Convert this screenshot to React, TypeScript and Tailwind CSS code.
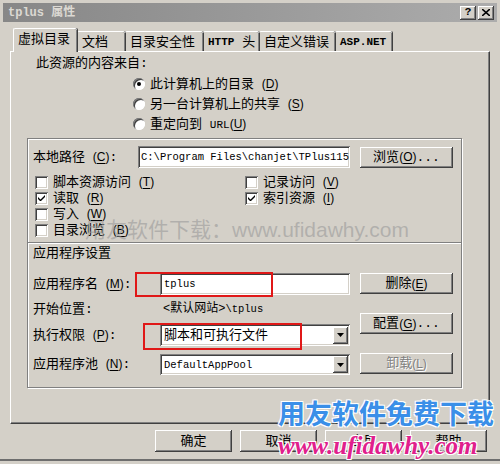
import React from 'react';

// Classic 3D bevels
const raised =
  'bg-[#d4d0c8] shadow-[inset_-1px_-1px_#404040,inset_1px_1px_#ffffff,inset_-2px_-2px_#808080,inset_2px_2px_#d4d0c8]';
const sunken =
  'bg-white shadow-[inset_1px_1px_#808080,inset_-1px_-1px_#ffffff,inset_2px_2px_#404040,inset_-2px_-2px_#d4d0c8]';

const Key = ({ k }: { k: string }) => (
  <span className="text-[12px] font-['Liberation_Sans',sans-serif]">
    (<span className="underline underline-offset-2">{k}</span>)
  </span>
);

const Radio = ({ checked, children }: { checked?: boolean; children: React.ReactNode }) => (
  <div className="h-[20px] flex items-center">
    <div className="w-[12px] h-[12px] rounded-full bg-white shadow-[inset_1px_1px_#808080,inset_-1px_-1px_#ffffff,inset_2px_2px_#404040] flex items-center justify-center">
      {checked && <div className="w-[4px] h-[4px] rounded-full bg-black" />}
    </div>
    <span className="ml-[5px] whitespace-nowrap">{children}</span>
  </div>
);

const Check = ({ checked, children }: { checked?: boolean; children: React.ReactNode }) => (
  <div className="h-[16px] flex items-center">
    <div className={`w-[13px] h-[13px] flex items-center justify-center ${sunken}`}>
      {checked && (
        <svg width="7" height="7" viewBox="0 0 7 7">
          <path d="M0 2 L0 4 L2 6 L3 6 L7 2 L7 0 L2.5 4.5 Z" fill="#000" />
        </svg>
      )}
    </div>
    <span className="ml-[5px] whitespace-nowrap">{children}</span>
  </div>
);

const Button = ({
  children,
  className = '',
  disabled,
}: {
  children: React.ReactNode;
  className?: string;
  disabled?: boolean;
}) => (
  <div
    className={`flex items-center justify-center whitespace-nowrap ${raised} ${
      disabled ? 'text-[#808080] [text-shadow:1px_1px_#ffffff]' : 'text-black'
    } ${className}`}
  >
    {children}
  </div>
);

const Select = ({ value }: { value: React.ReactNode }) => (
  <div className={`w-[190px] h-full flex items-center ${sunken} pl-[4px] pr-[2px]`}>
    <span className="flex-1">{value}</span>
    <div className={`w-[15px] h-[17px] flex items-center justify-center ${raised}`}>
      <svg width="7" height="4" viewBox="0 0 7 4">
        <path d="M0 0 H7 L3.5 4 Z" fill="#000" />
      </svg>
    </div>
  </div>
);

const tabs = [
  { label: '文档', w: 'w-[48px]' },
  { label: '目录安全性', w: 'w-[78px]' },
  { label: 'HTTP 头', w: 'w-[56px]' },
  { label: '自定义错误', w: 'w-[76px]' },
  { label: 'ASP.NET', w: 'w-[57px]' },
];

export default function App() {
  return (
    <div className="w-[500px] h-[464px] bg-[#d4d0c8] relative overflow-hidden pt-[3px] text-[13px] text-black font-['Liberation_Mono','Noto_Sans_CJK_SC',monospace] leading-none">
      {/* Title bar */}
      <div className="mx-[3px] h-[19px] flex items-center bg-gradient-to-r from-[#878787] to-[#acacac] pl-[5px] pr-[3px]">
        <span className="font-bold text-[12px] text-[#dcd9d3]">tplus 属性</span>
        <div className="ml-auto flex gap-[2px]">
          <div className={`w-[16px] h-[14px] flex items-center justify-center font-bold text-[11px] ${raised}`}>?</div>
          <div className={`w-[16px] h-[14px] flex items-center justify-center ${raised}`}>
            <svg width="8" height="7" viewBox="0 0 8 7">
              <path d="M0 0 L8 7 M8 0 L0 7" stroke="#000" strokeWidth="1.6" />
            </svg>
          </div>
        </div>
      </div>

      {/* Tabs */}
      <div className="mt-[6px] ml-[13px] h-[23px] flex items-end">
        <div className="relative z-10 -mb-[1px] w-[64px] h-[24px] bg-[#d4d0c8] border-l border-t border-white rounded-t-[2px] shadow-[inset_-1px_0_#808080,1px_0_#404040] flex items-center pl-[4px] pb-[2px]">
          虚拟目录
        </div>
        {tabs.map((t) => (
          <div
            key={t.label}
            className={`${t.w} h-[20px] border-t border-white rounded-t-[2px] shadow-[inset_-1px_0_#808080,1px_0_#404040] flex items-center pl-[5px] pt-[1px] whitespace-nowrap`}
          >
            {t.label === 'HTTP 头' ? (
              <>
                <span className="text-[11px] font-bold">HTTP</span>&nbsp;头
              </>
            ) : t.label === 'ASP.NET' ? (
              <span className="text-[11px] font-bold">ASP.NET</span>
            ) : (
              t.label
            )}
          </div>
        ))}
      </div>

      {/* Tab panel */}
      <div className="ml-[10px] w-[480px] h-[373px] border-l border-t border-white border-r border-b border-r-[#404040] border-b-[#404040] shadow-[inset_-1px_-1px_#808080]">
        <div className="mt-[1px] h-[20px] pl-[25px] flex items-center">此资源的内容来自:</div>
        <div className="mt-[1px] ml-[122px]">
          <Radio checked>
            此计算机上的目录 <Key k="D" />
          </Radio>
          <Radio>
            另一台计算机上的共享 <Key k="S" />
          </Radio>
          <Radio>
            重定向到 <span className="text-[11px]">URL</span>
            <Key k="U" />
          </Radio>
        </div>

        {/* Group box */}
        <div className="mt-[4px] ml-[16px] w-[435px] h-[250px] border border-[#808080] shadow-[1px_1px_#ffffff,inset_1px_1px_#ffffff]">
          <div className="mt-[7px] h-[22px] flex items-center">
            <div className="pl-[5px] w-[110px] whitespace-nowrap">
              本地路径 <Key k="C" />:
            </div>
            <div className={`w-[212px] h-full flex items-center pl-[3px] overflow-hidden whitespace-nowrap text-[10.5px] ${sunken}`}>
              C:\Program Files\chanjet\TPlus115
            </div>
            <Button className="ml-[10px] w-[93px] h-[21px]">
              浏览 <Key k="O" />
              ...
            </Button>
          </div>

          <div className="mt-[6px] pl-[7px] grid grid-cols-[210px_1fr]">
            <Check>
              脚本资源访问 <Key k="T" />
            </Check>
            <Check>
              记录访问 <Key k="V" />
            </Check>
            <Check checked>
              读取 <Key k="R" />
            </Check>
            <Check checked>
              索引资源 <Key k="I" />
            </Check>
            <Check>
              写入 <Key k="W" />
            </Check>
            <div />
            <Check>
              目录浏览 <Key k="B" />
            </Check>
            <div />
          </div>

          <div className="mt-[4px] h-[2px] border-t border-[#808080] border-b border-b-white" />
          <div className="mt-[1px] h-[16px] pl-[5px] flex items-center">应用程序设置</div>

          <div className="mt-[12px] flex">
            <div className="w-[322px] pl-[5px]">
              <div className="h-[22px] flex items-center">
                <div className="w-[127px] whitespace-nowrap">
                  应用程序名 <Key k="M" />:
                </div>
                <div className={`w-[190px] h-full flex items-center pl-[4px] text-[10.5px] ${sunken}`}>tplus</div>
              </div>
              <div className="mt-[6px] h-[16px] flex items-center">
                <div className="w-[130px]">开始位置:</div>
                <div className="text-[12px]">
                  &lt;默认网站&gt;<span className="text-[10.5px]">\tplus</span>
                </div>
              </div>
              <div className="mt-[7px] h-[22px] flex items-center">
                <div className="w-[127px] whitespace-nowrap">
                  执行权限 <Key k="P" />:
                </div>
                <Select value="脚本和可执行文件" />
              </div>
              <div className="mt-[8px] h-[21px] flex items-center">
                <div className="w-[127px] whitespace-nowrap">
                  应用程序池 <Key k="N" />:
                </div>
                <Select value={<span className="text-[10.5px]">DefaultAppPool</span>} />
              </div>
            </div>
            <div className="ml-[10px] w-[93px] flex flex-col">
              <Button className="h-[21px]">
                删除 <Key k="E" />
              </Button>
              <Button className="mt-[19px] h-[21px]">
                配置 <Key k="G" />
                ...
              </Button>
              <Button disabled className="mt-[19px] h-[21px]">
                卸载 <Key k="L" />
              </Button>
            </div>
          </div>
        </div>
      </div>

      {/* Dialog buttons */}
      <div className="mt-[6px] pl-[155px] flex gap-[8px]">
        <Button className="w-[77px] h-[22px]">确定</Button>
        <Button className="w-[77px] h-[22px]">取消</Button>
        <Button className="w-[77px] h-[22px]">应用</Button>
        <Button className="w-[77px] h-[22px]">帮助</Button>
      </div>
      <div className="mt-[7px] h-[2px] bg-[#6e6e6e]" />

      {/* Red annotation boxes */}
      <div className="absolute left-[135px] top-[272px] w-[138px] h-[25px] border-2 border-[#e01818]" />
      <div className="absolute left-[143px] top-[323px] w-[159px] h-[27px] border-2 border-[#e01818]" />

      {/* Watermarks */}
      <div className="absolute left-[85px] top-[219px] text-[21px] text-[#9a9a9a]/60 font-['Liberation_Sans','Noto_Sans_CJK_SC',sans-serif] whitespace-nowrap pointer-events-none">
        用友软件下载：www.ufidawhy.com
      </div>
      <div className="absolute left-[278px] top-[399px] text-[27px] font-bold text-[#3a8fe8] font-['Noto_Sans_CJK_SC',sans-serif] whitespace-nowrap [text-shadow:1px_1px_#ffffff,-1px_-1px_#ffffff,1px_-1px_#ffffff,-1px_1px_#ffffff]">
        用友软件免费下载
      </div>
      <div className="absolute left-[278px] top-[433px] text-[25px] italic font-bold text-[#e0208c] font-['Liberation_Serif',serif] whitespace-nowrap [text-shadow:1px_1px_#ffffff,-1px_-1px_#ffffff,1px_-1px_#ffffff,-1px_1px_#ffffff]">
        www.ufidawhy.com
      </div>
    </div>
  );
}
